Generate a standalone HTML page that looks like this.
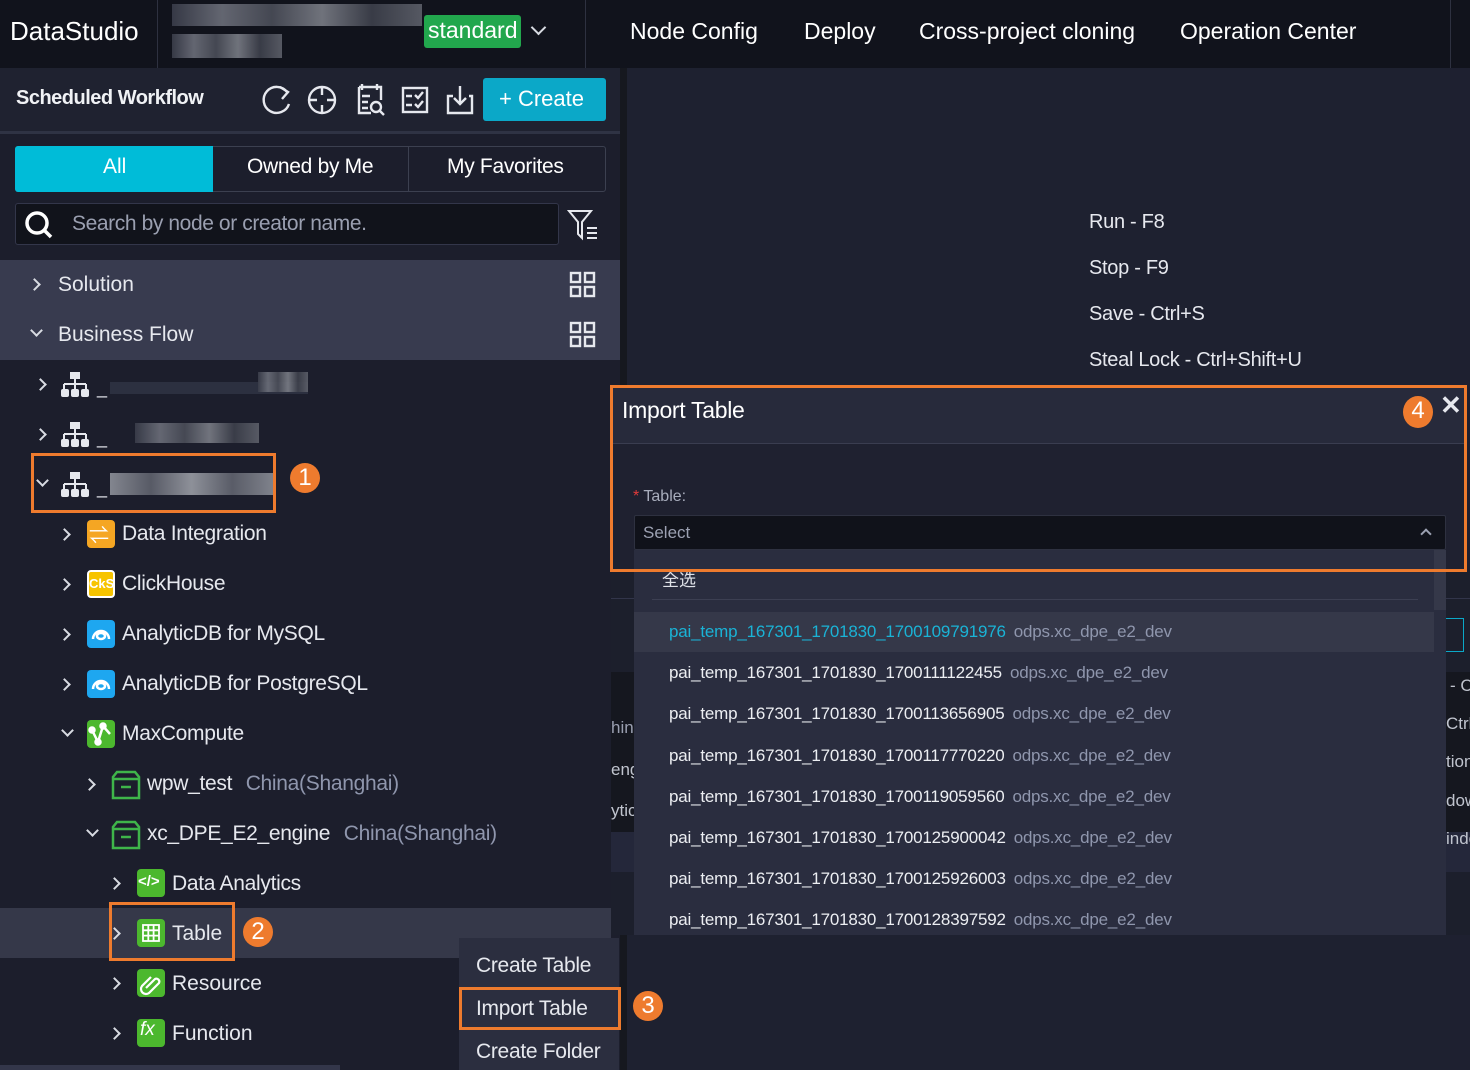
<!DOCTYPE html>
<html><head><meta charset="utf-8"><style>
*{margin:0;padding:0;box-sizing:border-box}
body{width:1470px;height:1070px;overflow:hidden;background:#1e2030;font-family:"Liberation Sans","Noto Sans CJK SC",sans-serif;color:#e6e8ee;position:relative}
.a{position:absolute}
.t{position:absolute;white-space:nowrap}
.chev{position:absolute;width:9px;height:9px;border-right:2.5px solid #d8dbe2;border-bottom:2.5px solid #d8dbe2}
.r{transform:rotate(-45deg)}
.d{transform:rotate(45deg)}
.ico{position:absolute;width:28px;height:28px;border-radius:4px}
.orb{position:absolute;border:3px solid #ee7b2e}
.num{position:absolute;width:30px;height:30px;border-radius:50%;background:#ee7b2e;color:#fff;font-size:24px;text-align:center;line-height:30px}
.opt{position:absolute;left:669px;font-size:17px;color:#eceef2;white-space:nowrap;letter-spacing:-0.2px}
.opt span{color:#8f96ad;margin-left:8px}
.blur{position:absolute;height:20px;background:linear-gradient(90deg,#3a3d4a,#6c6f7a,#4a4d58,#7a7d86,#3d404b,#5d606a);opacity:.9}
</style></head><body>
<div class="a" style="left:0;top:0;width:1470px;height:68px;background:#11131c"></div>
<div class="t" style="left:10px;top:16px;font-size:26px;color:#fff">DataStudio</div>
<div class="a" style="left:157px;top:0;width:1px;height:68px;background:#2e3140"></div>
<div class="a" style="left:585px;top:0;width:1px;height:68px;background:#2e3140"></div>
<div class="a" style="left:1450px;top:0;width:1px;height:68px;background:#2e3140"></div>
<div class="blur" style="left:172px;top:4px;width:250px;height:22px"></div>
<div class="blur" style="left:172px;top:34px;width:110px;height:24px"></div>
<div class="a" style="left:424px;top:15px;width:97px;height:33px;background:#22a74d;border-radius:3px"></div>
<div class="t" style="left:428px;top:17px;font-size:23px;color:#fff">standard</div>
<div class="chev d" style="left:533px;top:22px;width:11px;height:11px"></div>
<div class="t" style="left:630px;top:18px;font-size:23px;color:#fff">Node Config</div>
<div class="t" style="left:804px;top:18px;font-size:23px;color:#fff">Deploy</div>
<div class="t" style="left:919px;top:18px;font-size:23px;color:#fff">Cross-project cloning</div>
<div class="t" style="left:1180px;top:18px;font-size:23px;color:#fff">Operation Center</div>

<div class="a" style="left:0;top:68px;width:620px;height:1002px;background:#1c1e2c"></div>
<div class="a" style="left:0;top:68px;width:620px;height:64px;background:#1f2230"></div>
<div class="a" style="left:0;top:131px;width:620px;height:3px;background:#2f3344"></div>
<div class="t" style="left:16px;top:87px;font-size:20px;font-weight:bold;color:#f0f2f5;letter-spacing:-0.5px">Scheduled Workflow</div>
<svg class="a" style="left:256px;top:82px" width="226" height="36" fill="none" stroke="#e6e8ee" stroke-width="2.4">
<path d="M31 10 A13 13 0 1 0 33 22"/><path d="M24 5 L32 10 L26 17"/>
<circle cx="66" cy="18" r="13"/><path d="M66 5v8M66 23v8M53 18h8M71 18h8"/>
<path d="M103 5h22v13M103 5v26h12M106 2v6M121 2v6M106 14h8M106 20h6M106 26h6"/><circle cx="120" cy="25" r="5"/><path d="M124 29l4 4"/>
<rect x="147" y="6" width="24" height="24"/><path d="M150 14h6M150 23h6M159 13l3 3 5-6M159 22l3 3 5-6"/>
<path d="M197 14h-5v17h24v-17h-3M204 4v18M198 16l6 6 6-6"/>
</svg>
<div class="a" style="left:483px;top:78px;width:123px;height:43px;background:#0ba8c8;border-radius:3px"></div>
<div class="t" style="left:499px;top:86px;font-size:22px;color:#fff">+ Create</div>
<div class="a" style="left:15px;top:146px;width:591px;height:46px;border:1px solid #3c4050;border-radius:3px"></div>
<div class="a" style="left:15px;top:146px;width:198px;height:46px;background:#00bcd8;border-radius:3px 0 0 3px"></div>
<div class="a" style="left:408px;top:146px;width:1px;height:46px;background:#3c4050"></div>
<div class="t" style="left:103px;top:155px;font-size:21px;color:#fff">All</div>
<div class="t" style="left:247px;top:155px;font-size:21px;color:#fff;letter-spacing:-0.3px">Owned by Me</div>
<div class="t" style="left:447px;top:155px;font-size:21px;color:#fff;letter-spacing:-0.3px">My Favorites</div>
<div class="a" style="left:15px;top:203px;width:544px;height:42px;background:#11131b;border:1px solid #33364a;border-radius:3px"></div>
<svg class="a" style="left:22px;top:208px" width="34" height="34" fill="none" stroke="#fff" stroke-width="3.5"><circle cx="15" cy="15" r="10"/><path d="M22 22l7 7"/></svg>
<div class="t" style="left:72px;top:212px;font-size:21px;color:#9a9fb0;letter-spacing:-0.4px">Search by node or creator name.</div>
<svg class="a" style="left:567px;top:208px" width="34" height="34" fill="none" stroke="#e6e8ee" stroke-width="2"><path d="M2 3h22l-9 11v16l-4-4V14z"/><path d="M20 20h10M20 25h10M20 30h10"/></svg>
<div class="a" style="left:0;top:260px;width:620px;height:100px;background:#383b4f"></div>
<div class="chev r" style="left:30px;top:280px"></div>
<div class="t" style="left:58px;top:273px;font-size:21px">Solution</div>
<div class="chev d" style="left:32px;top:326px"></div>
<div class="t" style="left:58px;top:323px;font-size:21px">Business Flow</div>
<svg class="a" style="left:569px;top:271px" width="28" height="80" fill="none" stroke="#e6e8ee" stroke-width="2.4"><rect x="2" y="2" width="9" height="9"/><rect x="16" y="2" width="9" height="9"/><rect x="2" y="16" width="9" height="9"/><rect x="16" y="16" width="9" height="9"/><rect x="2" y="52" width="9" height="9"/><rect x="16" y="52" width="9" height="9"/><rect x="2" y="66" width="9" height="9"/><rect x="16" y="66" width="9" height="9"/></svg>
<svg class="a" style="left:60px;top:370px" width="32" height="130" fill="#e6e8ee"><g id="fl"><rect x="10" y="2" width="10" height="7"/><rect x="14" y="9" width="2" height="5"/><rect x="4" y="13" width="22" height="2"/><rect x="3" y="14" width="2" height="5"/><rect x="14" y="14" width="2" height="5"/><rect x="25" y="14" width="2" height="5"/><rect x="1" y="19" width="8" height="8" rx="2"/><rect x="11" y="19" width="8" height="8" rx="2"/><rect x="21" y="19" width="8" height="8" rx="2"/></g><use href="#fl" y="50"/><use href="#fl" y="100"/></svg>
<div class="chev r" style="left:36px;top:380px"></div>
<div class="chev r" style="left:36px;top:430px"></div>
<div class="chev d" style="left:38px;top:476px"></div>
<div class="t" style="left:97px;top:378px;font-size:18px">_</div>
<div class="t" style="left:97px;top:428px;font-size:18px">_</div>
<div class="t" style="left:97px;top:478px;font-size:18px">_</div>
<div class="blur" style="left:110px;top:382px;width:198px;height:12px;background:#2f3242"></div>
<div class="blur" style="left:258px;top:372px;width:50px;height:20px"></div>
<div class="blur" style="left:135px;top:423px;width:124px;height:20px"></div>
<div class="blur" style="left:110px;top:473px;width:163px;height:22px;background:linear-gradient(90deg,#8e919a,#5e616c,#9a9da5,#60636e,#8a8d96)"></div>
<div class="orb" style="left:31px;top:453px;width:245px;height:60px"></div>
<div class="num" style="left:290px;top:463px">1</div>
<div class="chev r" style="left:60px;top:530px"></div>
<div class="ico" style="left:87px;top:520px;background:#f5a623"></div>
<div class="t" style="left:89px;top:519px;font-size:20px;color:#fff">⇌</div>
<div class="t" style="left:122px;top:522px;font-size:21px;letter-spacing:-0.3px">Data Integration</div>
<div class="chev r" style="left:60px;top:580px"></div>
<div class="ico" style="left:87px;top:570px;background:#f7c400;border:2px solid #fff"></div>
<div class="t" style="left:89px;top:576px;font-size:13px;font-weight:bold;color:#fff">CkS</div>
<div class="t" style="left:122px;top:572px;font-size:21px;letter-spacing:-0.3px">ClickHouse</div>
<div class="chev r" style="left:60px;top:630px"></div>
<div class="ico" style="left:87px;top:620px;background:#1ea7f0"></div>
<svg class="a" style="left:87px;top:620px" width="28" height="28" fill="none" stroke="#fff" stroke-width="2.5"><path d="M6 19a8 8 0 1 1 16 0"/><ellipse cx="14" cy="16" rx="4" ry="3"/></svg>
<div class="t" style="left:122px;top:622px;font-size:21px;letter-spacing:-0.3px">AnalyticDB for MySQL</div>
<div class="chev r" style="left:60px;top:680px"></div>
<div class="ico" style="left:87px;top:670px;background:#1ea7f0"></div>
<svg class="a" style="left:87px;top:670px" width="28" height="28" fill="none" stroke="#fff" stroke-width="2.5"><path d="M6 19a8 8 0 1 1 16 0"/><ellipse cx="14" cy="16" rx="4" ry="3"/></svg>
<div class="t" style="left:122px;top:672px;font-size:21px;letter-spacing:-0.3px">AnalyticDB for PostgreSQL</div>
<div class="chev d" style="left:63px;top:726px"></div>
<div class="ico" style="left:87px;top:720px;background:#4cb82e"></div>
<svg class="a" style="left:87px;top:720px" width="28" height="28" stroke="#fff" stroke-width="2.5" fill="#fff"><path d="M5 10l6 12 5-16 7 8" fill="none"/><circle cx="5" cy="10" r="2.5"/><circle cx="11" cy="22" r="2.5"/><circle cx="16" cy="6" r="2.5"/></svg>
<div class="t" style="left:122px;top:722px;font-size:21px;letter-spacing:-0.3px">MaxCompute</div>
<div class="chev r" style="left:85px;top:780px"></div>
<svg class="a" style="left:110px;top:769px" width="32" height="32" fill="none" stroke="#3fb54a" stroke-width="2.5"><path d="M3 8l4-5h18l4 5v21H3z"/><path d="M3 10h26M11 18h10"/></svg>
<div class="t" style="left:147px;top:772px;font-size:21px;letter-spacing:-0.3px">wpw_test <span style="color:#8f96ad;margin-left:8px">China(Shanghai)</span></div>
<div class="chev d" style="left:88px;top:826px"></div>
<svg class="a" style="left:110px;top:819px" width="32" height="32" fill="none" stroke="#3fb54a" stroke-width="2.5"><path d="M3 8l4-5h18l4 5v21H3z"/><path d="M3 10h26M11 18h10"/></svg>
<div class="t" style="left:147px;top:822px;font-size:21px;letter-spacing:-0.3px">xc_DPE_E2_engine <span style="color:#8f96ad;margin-left:8px">China(Shanghai)</span></div>
<div class="chev r" style="left:110px;top:879px"></div>
<div class="ico" style="left:137px;top:869px;background:#4cb82e"></div>
<div class="t" style="left:138px;top:873px;font-size:15px;font-weight:bold;color:#fff">&lt;/&gt;</div>
<div class="t" style="left:172px;top:872px;font-size:21px;letter-spacing:-0.3px">Data Analytics</div>
<div class="a" style="left:0;top:908px;width:611px;height:50px;background:#353849"></div>
<div class="chev r" style="left:110px;top:929px"></div>
<div class="ico" style="left:137px;top:919px;background:#4cb82e"></div>
<svg class="a" style="left:137px;top:919px" width="28" height="28" fill="none" stroke="#fff" stroke-width="1.8"><rect x="6" y="6" width="16" height="16"/><path d="M11.3 6v16M16.6 6v16M6 11.3h16M6 16.6h16"/></svg>
<div class="t" style="left:172px;top:922px;font-size:21px">Table</div>
<div class="orb" style="left:109px;top:902px;width:126px;height:59px"></div>
<div class="num" style="left:243px;top:917px">2</div>
<div class="chev r" style="left:110px;top:979px"></div>
<div class="ico" style="left:137px;top:969px;background:#4cb82e"></div>
<svg class="a" style="left:137px;top:969px" width="28" height="28" fill="none" stroke="#fff" stroke-width="2.2"><path d="M9 19l9-9a3 3 0 0 1 4 4l-10 10a5 5 0 0 1-7-7l9-9"/></svg>
<div class="t" style="left:172px;top:972px;font-size:21px">Resource</div>
<div class="chev r" style="left:110px;top:1029px"></div>
<div class="ico" style="left:137px;top:1019px;background:#4cb82e"></div>
<div class="t" style="left:140px;top:1019px;font-size:19px;font-style:italic;color:#fff">fx</div>
<div class="t" style="left:172px;top:1022px;font-size:21px">Function</div>
<div class="a" style="left:0;top:1065px;width:340px;height:5px;background:#33364a"></div>

<div class="a" style="left:620px;top:68px;width:7px;height:1002px;background:#16181f"></div>
<div class="a" style="left:627px;top:68px;width:823px;height:1002px;background:#1e2130"></div>
<div class="t" style="left:1089px;top:211px;font-size:20px;letter-spacing:-0.3px">Run - F8</div>
<div class="t" style="left:1089px;top:257px;font-size:20px;letter-spacing:-0.3px">Stop - F9</div>
<div class="t" style="left:1089px;top:303px;font-size:20px;letter-spacing:-0.3px">Save - Ctrl+S</div>
<div class="t" style="left:1089px;top:349px;font-size:20px;letter-spacing:-0.3px">Steal Lock - Ctrl+Shift+U</div>
<div class="a" style="left:611px;top:570px;width:859px;height:365px;background:#1c1f2c"></div>
<div class="a" style="left:611px;top:598px;width:859px;height:1px;background:#32354a"></div>
<div class="a" style="left:611px;top:672px;width:859px;height:200px;background:#15171f"></div>
<div class="a" style="left:611px;top:832px;width:859px;height:40px;background:#24273a"></div>
<div class="a" style="left:1446px;top:618px;width:18px;height:34px;border:1px solid #0ba8c8;border-left:none"></div>
<div class="t" style="left:611px;top:718px;font-size:17px;color:#9a9fb0">hin</div>
<div class="t" style="left:611px;top:760px;font-size:17px;color:#c0c4ce">eng</div>
<div class="t" style="left:611px;top:801px;font-size:17px;color:#c0c4ce">ytic</div>
<div class="t" style="left:1450px;top:676px;font-size:17px;color:#c0c4ce">- C</div>
<div class="t" style="left:1446px;top:714px;font-size:17px;color:#c0c4ce">Ctrl</div>
<div class="t" style="left:1446px;top:752px;font-size:17px;color:#c0c4ce">tion</div>
<div class="t" style="left:1446px;top:791px;font-size:17px;color:#c0c4ce">dow</div>
<div class="t" style="left:1446px;top:829px;font-size:17px;color:#c0c4ce">inde</div>
<div class="a" style="left:611px;top:386px;width:855px;height:58px;background:#272a3b"></div>
<div class="a" style="left:611px;top:443px;width:855px;height:1px;background:#3a3d50"></div>
<div class="a" style="left:611px;top:444px;width:855px;height:126px;background:#1f2130"></div>
<div class="t" style="left:622px;top:397px;font-size:23px;color:#fff;letter-spacing:-0.3px">Import Table</div>
<div class="t" style="left:1440px;top:390px;font-size:26px;font-weight:bold;color:#e6e8ee">✕</div>
<div class="num" style="left:1403px;top:396px;width:30px;height:32px">4</div>
<div class="t" style="left:633px;top:488px;font-size:16px;color:#a8adbc"><span style="color:#e23a3a">*</span> Table:</div>
<div class="a" style="left:634px;top:515px;width:812px;height:35px;background:#10121a;border:1px solid #2e3140;border-radius:2px"></div>
<div class="t" style="left:643px;top:523px;font-size:17px;color:#9ca1b2">Select</div>
<div class="chev" style="left:1422px;top:530px;width:8px;height:8px;transform:rotate(-135deg);border-color:#9ca1b2;border-width:2px"></div>
<div class="a" style="left:634px;top:550px;width:812px;height:385px;background:#2a2d3f"></div>
<div class="a" style="left:1434px;top:550px;width:12px;height:60px;background:#353849"></div>
<div class="a" style="left:652px;top:599px;width:766px;height:1px;background:#3c3f52"></div>
<div class="t" style="left:662px;top:566px;font-size:17px;color:#dfe2e8">全选</div>
<div class="a" style="left:634px;top:612px;width:800px;height:40px;background:#353849"></div>
<div class="opt" style="top:622px;color:#1ab3d6">pai_temp_167301_1701830_1700109791976<span>odps.xc_dpe_e2_dev</span></div>
<div class="opt" style="top:663px">pai_temp_167301_1701830_1700111122455<span>odps.xc_dpe_e2_dev</span></div>
<div class="opt" style="top:704px">pai_temp_167301_1701830_1700113656905<span>odps.xc_dpe_e2_dev</span></div>
<div class="opt" style="top:746px">pai_temp_167301_1701830_1700117770220<span>odps.xc_dpe_e2_dev</span></div>
<div class="opt" style="top:787px">pai_temp_167301_1701830_1700119059560<span>odps.xc_dpe_e2_dev</span></div>
<div class="opt" style="top:828px">pai_temp_167301_1701830_1700125900042<span>odps.xc_dpe_e2_dev</span></div>
<div class="opt" style="top:869px">pai_temp_167301_1701830_1700125926003<span>odps.xc_dpe_e2_dev</span></div>
<div class="opt" style="top:910px">pai_temp_167301_1701830_1700128397592<span>odps.xc_dpe_e2_dev</span></div>
<div class="orb" style="left:610px;top:385px;width:857px;height:187px"></div>
<div class="a" style="left:459px;top:938px;width:160px;height:132px;background:#2b2e3f"></div>
<div class="t" style="left:476px;top:954px;font-size:21px;letter-spacing:-0.3px">Create Table</div>
<div class="t" style="left:476px;top:997px;font-size:21px;letter-spacing:-0.3px">Import Table</div>
<div class="t" style="left:476px;top:1040px;font-size:21px;letter-spacing:-0.3px">Create Folder</div>
<div class="orb" style="left:459px;top:987px;width:162px;height:43px"></div>
<div class="num" style="left:633px;top:991px">3</div>
</body></html>
